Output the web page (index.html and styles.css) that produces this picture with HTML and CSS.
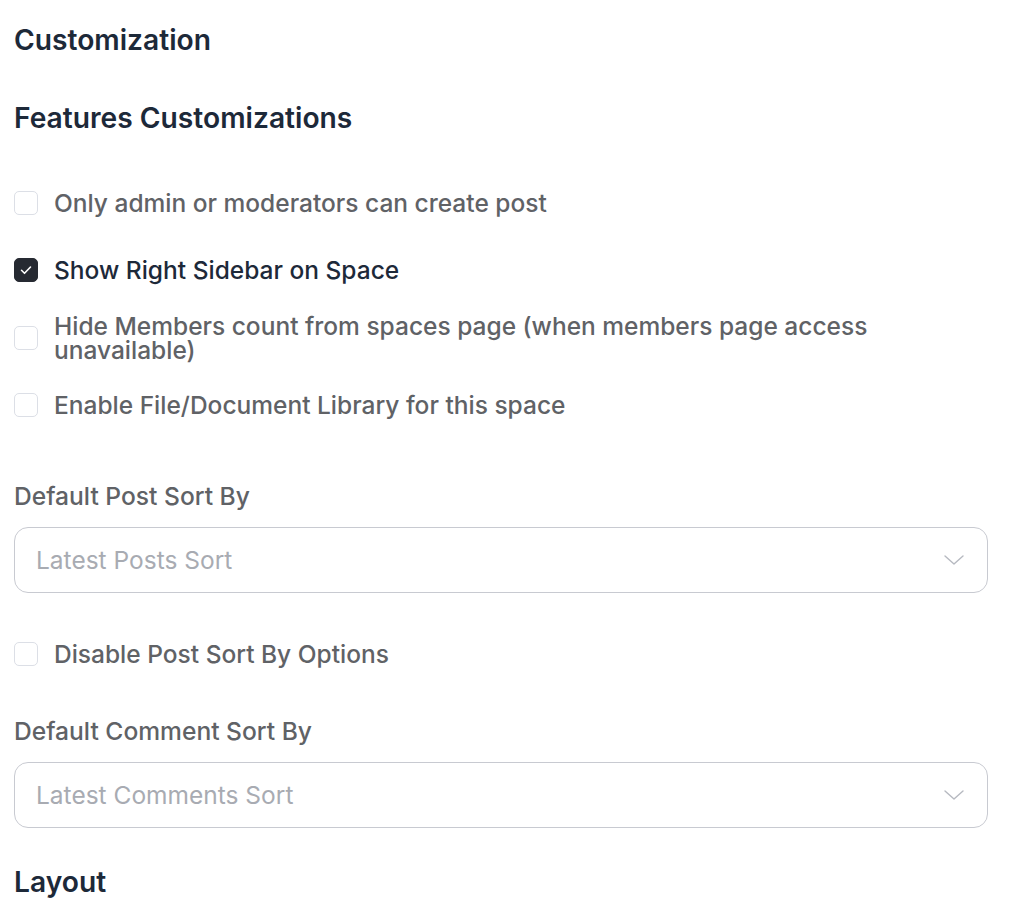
FILE: index.html
```html
<!DOCTYPE html>
<html lang="en">
<head>
<meta charset="utf-8">
<title>Customization</title>
<link rel="stylesheet" href="styles.css">
</head>
<body>
<div class="page">
  <h2 class="heading heading-main">Customization</h2>
  <h3 class="heading heading-sub">Features Customizations</h3>

  <div class="check-group">
    <label class="check-row">
      <span class="box"></span>
      <span class="check-text">Only admin or moderators can create post</span>
    </label>
    <label class="check-row is-checked">
      <span class="box">
        <svg viewBox="0 0 24 24" width="24" height="24"><path d="M7.5 12.3l3 3 6-6.3" fill="none" stroke="#fff" stroke-width="1.6" stroke-linecap="round" stroke-linejoin="round"/></svg>
      </span>
      <span class="check-text">Show Right Sidebar on Space</span>
    </label>
    <label class="check-row">
      <span class="box"></span>
      <span class="check-text">Hide Members count from spaces page (when members page access unavailable)</span>
    </label>
    <label class="check-row">
      <span class="box"></span>
      <span class="check-text">Enable File/Document Library for this space</span>
    </label>
  </div>

  <div class="field field-first">
    <div class="field-label">Default Post Sort By</div>
    <div class="select">
      <span class="select-text">Latest Posts Sort</span>
      <svg class="chevron" viewBox="0 0 20 10" width="20" height="10"><path d="M1 1l9 8 9-8" fill="none" stroke="#b6b9c0" stroke-width="1.4" stroke-linecap="round" stroke-linejoin="round"/></svg>
    </div>
  </div>

  <label class="check-row check-single">
    <span class="box"></span>
    <span class="check-text">Disable Post Sort By Options</span>
  </label>

  <div class="field field-second">
    <div class="field-label">Default Comment Sort By</div>
    <div class="select">
      <span class="select-text">Latest Comments Sort</span>
      <svg class="chevron" viewBox="0 0 20 10" width="20" height="10"><path d="M1 1l9 8 9-8" fill="none" stroke="#b6b9c0" stroke-width="1.4" stroke-linecap="round" stroke-linejoin="round"/></svg>
    </div>
  </div>

  <h3 class="heading heading-layout">Layout</h3>
</div>
</body>
</html>
```

FILE: styles.css
```css
html, body {
  margin: 0;
  padding: 0;
  background: #ffffff;
}

body {
  font-family: Inter, "Noto Sans", "Liberation Sans", sans-serif;
  -webkit-font-smoothing: antialiased;
}

.page {
  width: 974px;
  padding: 24px 36px 0 14px;
}

.heading {
  margin: 0;
  font-size: 28.2px;
  line-height: 32px;
  font-weight: 600;
  color: #1d2939;
}

.heading-main {
  margin-bottom: 46px;
}

.heading-sub {
  margin-bottom: 35px;
}

.check-group {
  display: flex;
  flex-direction: column;
}

.check-row {
  display: flex;
  align-items: center;
  gap: 16px;
  height: 67.5px;
  cursor: pointer;
}

.box {
  flex: 0 0 auto;
  box-sizing: border-box;
  width: 24px;
  height: 24px;
  border: 1.5px solid #dcdfe6;
  border-radius: 5px;
  background: #fff;
  display: flex;
  align-items: center;
  justify-content: center;
}

.box svg {
  display: block;
  margin: -1.5px;
}

.is-checked .box {
  background: #262a32;
  border-color: #262a32;
}

.check-text {
  font-size: 24.5px;
  line-height: 24px;
  font-weight: 500;
  color: #606266;
}

.is-checked .check-text {
  color: #1d2939;
}

.field-first {
  margin-top: 45px;
}

.field-label {
  font-size: 24.6px;
  line-height: 24px;
  font-weight: 500;
  color: #606266;
  margin-bottom: 19px;
}

.select {
  box-sizing: border-box;
  height: 66px;
  border: 1px solid #c8cad1;
  border-radius: 14px;
  padding: 0 23px 0 21px;
  display: flex;
  align-items: center;
  justify-content: space-between;
}

.select-text {
  font-size: 24.5px;
  line-height: 24px;
  font-weight: 400;
  color: #a8abb2;
}

.chevron {
  display: block;
}

.check-single {
  margin-top: 27px;
}

.field-second {
  margin-top: 31px;
}

.heading-layout {
  margin-top: 38px;
}
```
